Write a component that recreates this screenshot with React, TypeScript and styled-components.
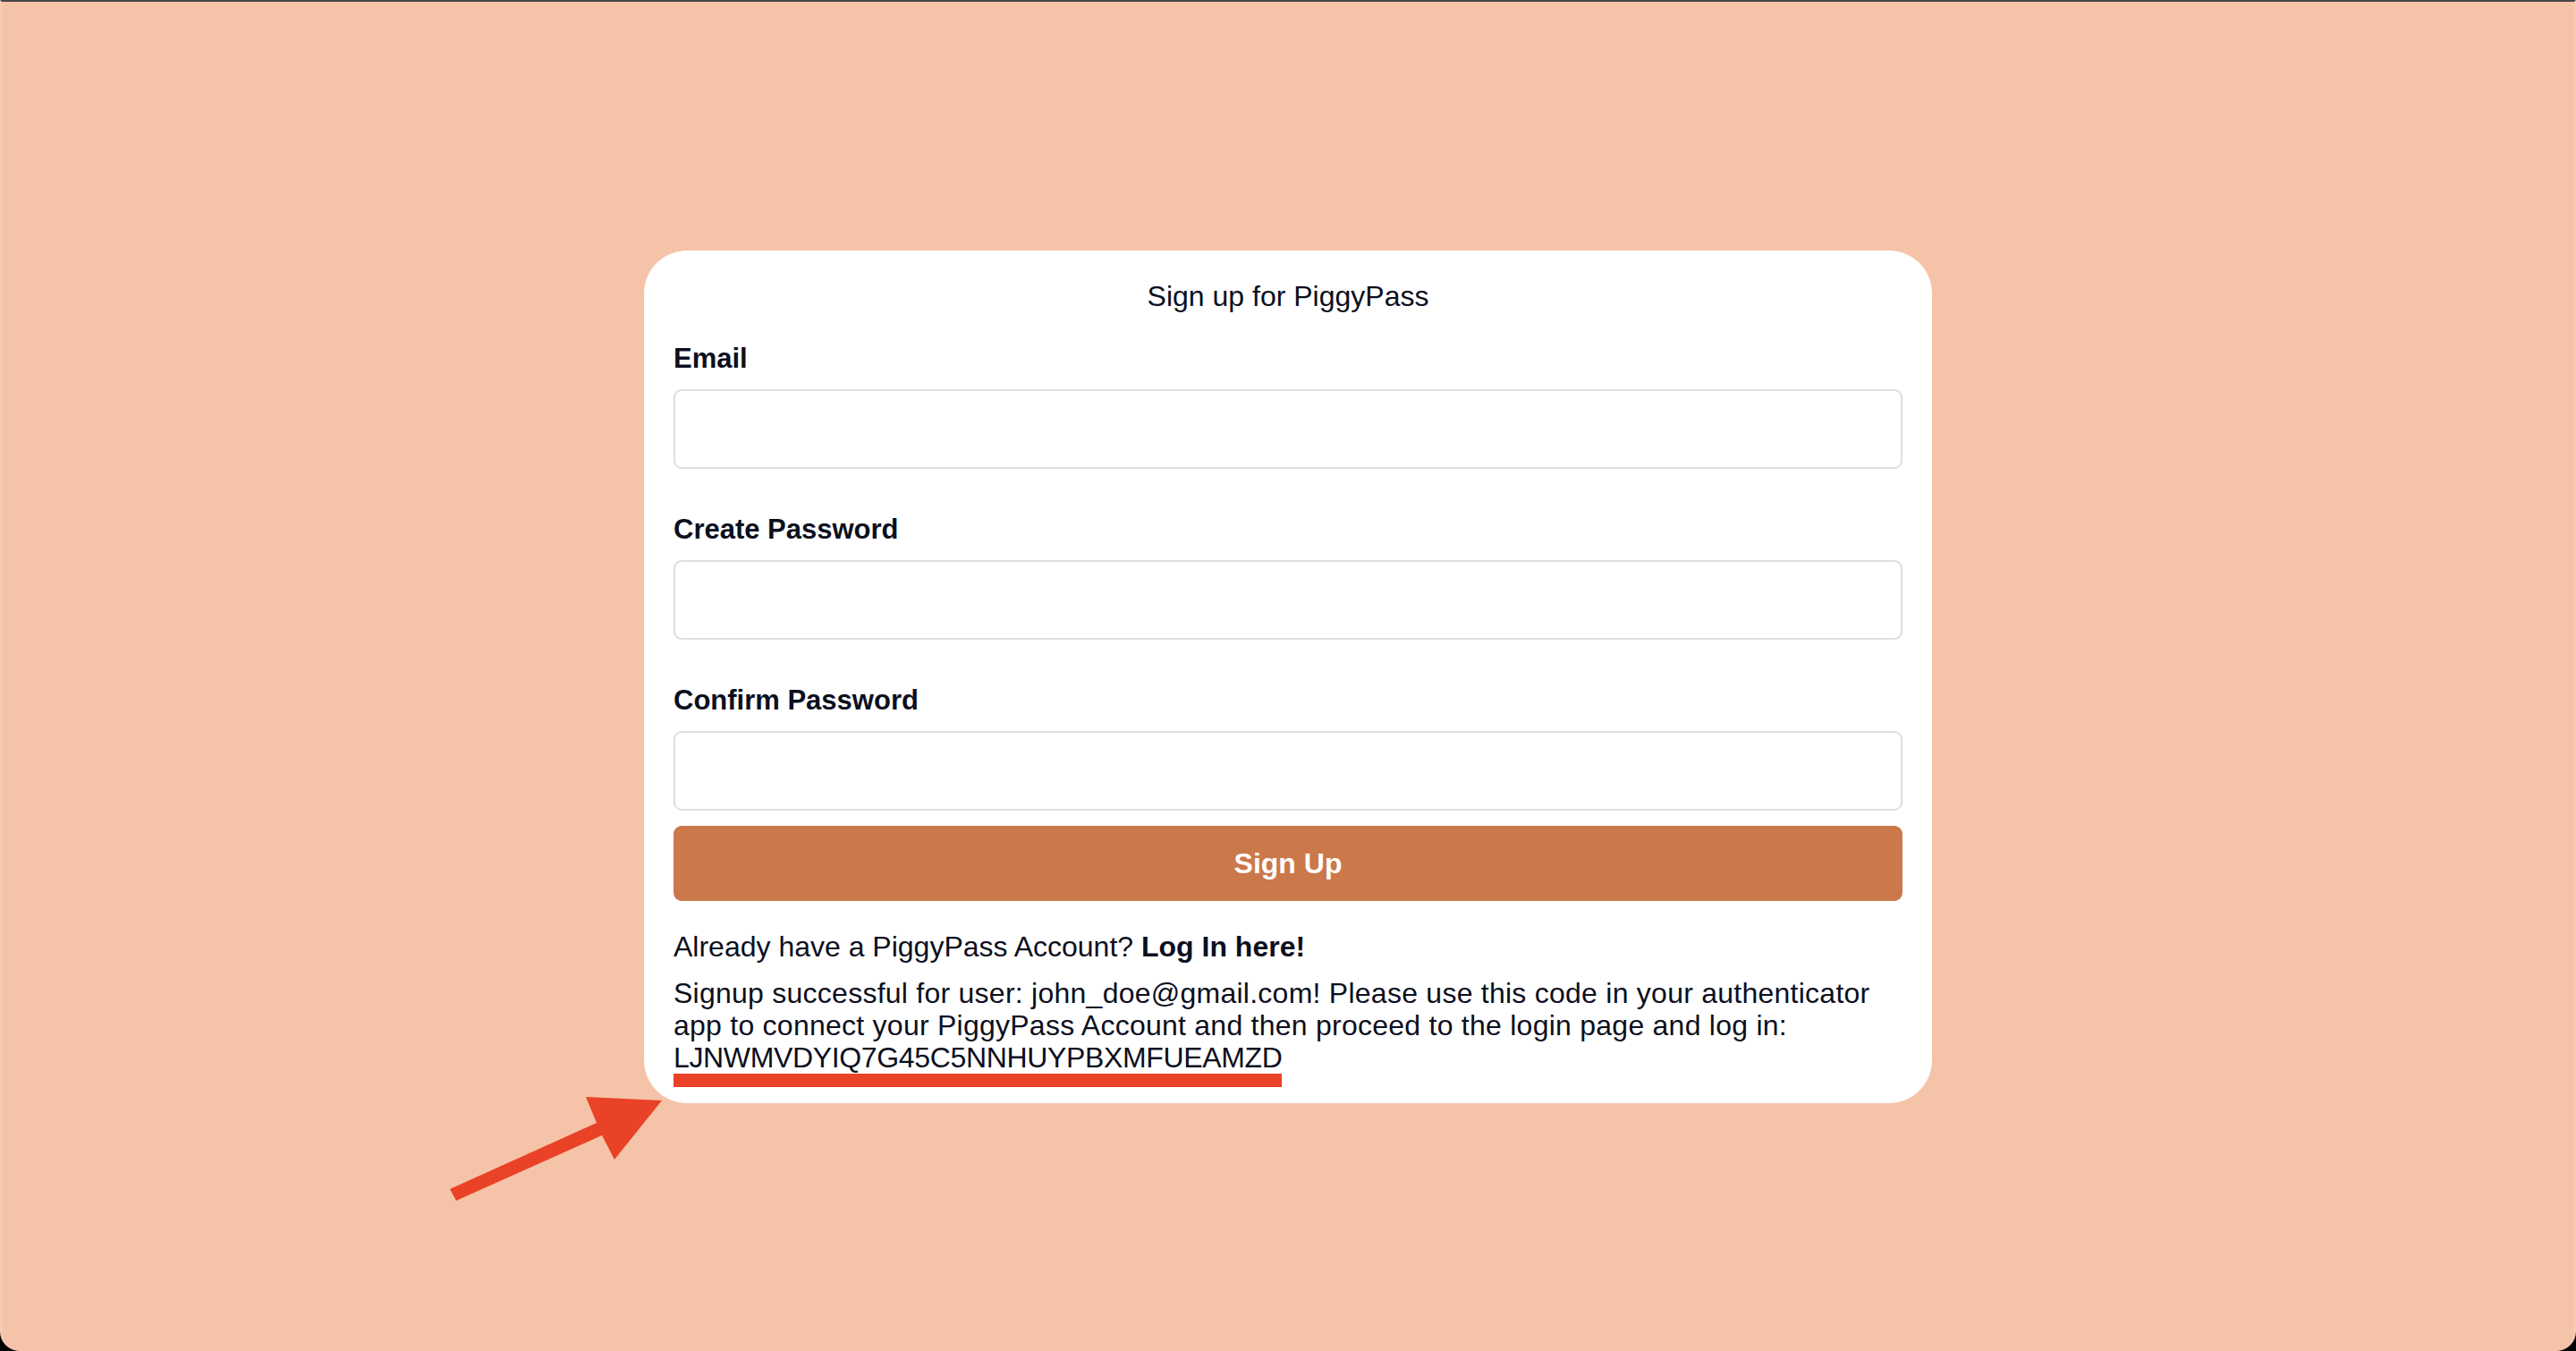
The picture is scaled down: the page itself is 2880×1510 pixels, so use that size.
import React from "react";
import styled, { createGlobalStyle } from "styled-components";

const GlobalStyle = createGlobalStyle`
  html, body {
    margin: 0;
    padding: 0;
    background: #000;
  }
  body {
    font-family: "Liberation Sans", Arial, sans-serif;
    color: #0c0f1d;
  }
  *, *::before, *::after {
    box-sizing: border-box;
  }
`;

const Window = styled.div`
  position: relative;
  width: 2880px;
  height: 1510px;
  background: #f5c4a8;
  border-top: 2px solid #474747;
  border-left: 2px solid #f7cdb8;
  border-right: 2px solid #f7cdb8;
  border-radius: 0 0 22px 22px;
  display: flex;
  align-items: center;
  justify-content: center;
  overflow: hidden;
`;

const Card = styled.main`
  width: 1440px;
  background: #ffffff;
  border-radius: 48px;
  padding: 33px 33px 33px;
  display: flex;
  flex-direction: column;
`;

const Title = styled.h1`
  margin: 0 0 34px;
  font-size: 32px;
  line-height: 36px;
  font-weight: 400;
  text-align: center;
`;

const Form = styled.form`
  display: flex;
  flex-direction: column;
  gap: 50px;
`;

const Field = styled.div`
  display: flex;
  flex-direction: column;
  gap: 16px;
`;

const Label = styled.label`
  font-size: 31px;
  line-height: 36px;
  font-weight: 700;
`;

const Input = styled.input`
  height: 89px;
  width: 100%;
  border: 2px solid #dedede;
  border-radius: 9px;
  background: #fff;
  padding: 0 20px;
  font-family: inherit;
  font-size: 32px;
  outline: none;
`;

const SubmitButton = styled.button`
  margin-top: 17px;
  height: 84px;
  width: 100%;
  border: none;
  border-radius: 9px;
  background: #cb784b;
  color: #ffffff;
  font-family: inherit;
  font-size: 32px;
  font-weight: 700;
  line-height: 36px;
  cursor: pointer;
`;

const Text = styled.p<{ $gap: number; $tracking?: number }>`
  margin: ${(p) => p.$gap}px 0 0;
  font-size: 32px;
  line-height: 36px;
  letter-spacing: ${(p) => p.$tracking ?? 0}px;
`;

const LoginLink = styled.a`
  color: inherit;
  font-weight: 700;
  text-decoration: none;
`;

const Code = styled.span`
  position: relative;
  letter-spacing: -0.35px;

  &::after {
    content: "";
    position: absolute;
    left: 0;
    right: 0;
    top: 100%;
    height: 15px;
    background: #e94226;
  }
`;

const Arrow = styled.svg`
  position: absolute;
  left: 478px;
  top: 1198px;
  width: 280px;
  height: 160px;
  pointer-events: none;
`;

export default function App() {
  return (
    <>
      <GlobalStyle />
      <Window>
        <Card>
          <Title>Sign up for PiggyPass</Title>
          <Form onSubmit={(e) => e.preventDefault()}>
            <Field>
              <Label htmlFor="email">Email</Label>
              <Input id="email" type="email" />
            </Field>
            <Field>
              <Label htmlFor="create-password">Create Password</Label>
              <Input id="create-password" type="password" />
            </Field>
            <Field>
              <Label htmlFor="confirm-password">Confirm Password</Label>
              <Input id="confirm-password" type="password" />
            </Field>
          </Form>
          <SubmitButton type="button">Sign Up</SubmitButton>
          <Text $gap={33}>
            Already have a PiggyPass Account? <LoginLink href="#">Log In here!</LoginLink>
          </Text>
          <Text $gap={16} $tracking={0.25}>
            Signup successful for user: john_doe@gmail.com! Please use this code in your
            authenticator app to connect your PiggyPass Account and then proceed to the login
            page and log in: <Code>LJNWMVDYIQ7G45C5NNHUYPBXMFUEAMZD</Code>
          </Text>
        </Card>
        <Arrow viewBox="0 0 280 160">
          <polygon
            points="23,129 187,55 175,26 260,30 207,96 193,69 30,142"
            fill="#e94226"
          />
        </Arrow>
      </Window>
    </>
  );
}
